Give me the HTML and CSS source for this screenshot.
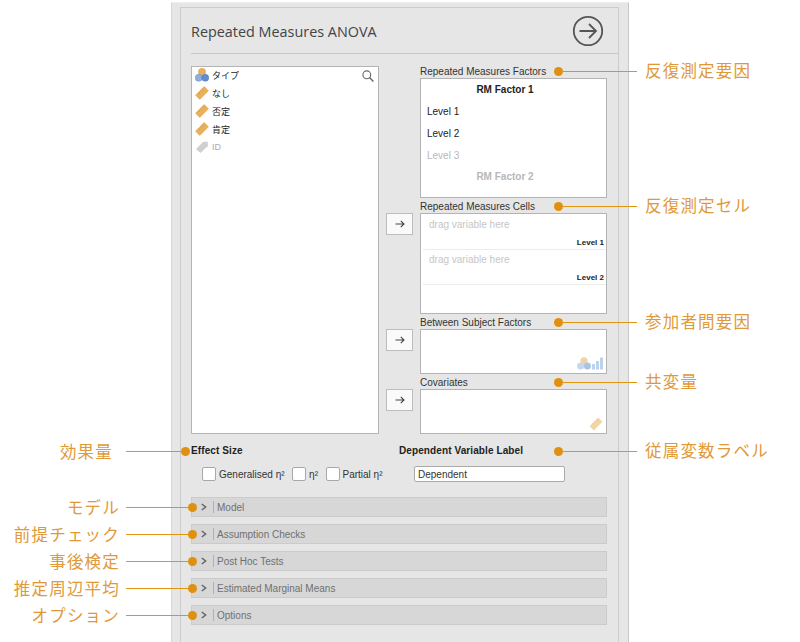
FILE: index.html
```html
<!DOCTYPE html>
<html lang="en">
<head>
    <meta charset="UTF-8">
    <meta name="viewport" content="width=device-width, initial-scale=1.0">
    <title>Repeated Measures ANOVA</title>
    <link rel="stylesheet" href="styles.css">
</head>
<body>
    <svg class="defs" width="0" height="0">
        <symbol id="ruler" viewBox="0 0 14 14">
            <path d="M.6 9.2 9.2.6 13.4 4.8 4.8 13.4Z" fill="#e8b25c" stroke="#dc9f45" stroke-width=".6"/>
            <path d="M3.4 6.4 5.2 8.2M5.4 4.4 6.6 5.6M7.4 2.4 9.2 4.2" stroke="#cf9238" stroke-width=".7"/>
        </symbol>
        <symbol id="nominal" viewBox="0 0 14 14">
            <circle cx="7" cy="3.9" r="3.6" fill="#e8b25c" stroke="#d49a45" stroke-width=".5"/>
            <circle cx="3.7" cy="9.8" r="3.5" fill="#8fb0dd" stroke="#5f88c2" stroke-width=".5"/>
            <circle cx="10.3" cy="9.8" r="3.5" fill="#5f8fd0" stroke="#4a78b8" stroke-width=".5"/>
        </symbol>
        <symbol id="tag" viewBox="0 0 14 14">
            <path d="M1 9 8 2 12.6 1.6 13 6 5.4 13Z" fill="#cfcfcf"/>
        </symbol>
        <symbol id="arrow" viewBox="0 0 12 12">
            <path d="M1.5 6H10M6.8 2.8 10 6 6.8 9.2" fill="none" stroke="#444" stroke-width="1.1"/>
        </symbol>
        <symbol id="chevron" viewBox="0 0 6 8">
            <path d="M.8 1 4.6 4 .8 7" fill="none" stroke="#666" stroke-width="1.5"/>
        </symbol>
    </svg>

    <div class="panel">
        <div class="panel-inner">
            <header class="panel-header">
                <h1>Repeated Measures ANOVA</h1>
                <svg class="run-icon" viewBox="0 0 32 32">
                    <circle cx="16" cy="16" r="14.2" fill="none" stroke="#555" stroke-width="1.8"/>
                    <path d="M7.5 16H24M17 9 24 16 17 23" fill="none" stroke="#555" stroke-width="1.8"/>
                </svg>
            </header>

            <div class="variables">
                <div class="supplier">
                    <svg class="search-icon" viewBox="0 0 12 12">
                        <circle cx="4.8" cy="4.8" r="3.9" fill="none" stroke="#666" stroke-width="1.1"/>
                        <path d="M7.7 7.7 11.4 11.4" stroke="#666" stroke-width="1.4"/>
                    </svg>
                    <ul class="var-list">
                        <li><svg class="var-icon"><use href="#nominal"/></svg>タイプ</li>
                        <li><svg class="var-icon"><use href="#ruler"/></svg>なし</li>
                        <li><svg class="var-icon"><use href="#ruler"/></svg>否定</li>
                        <li><svg class="var-icon"><use href="#ruler"/></svg>肯定</li>
                        <li class="muted"><svg class="var-icon"><use href="#tag"/></svg>ID</li>
                    </ul>
                </div>

                <div class="targets">
                    <section class="target">
                        <h2>Repeated Measures Factors</h2>
                        <div class="box factors">
                            <div class="factor-title">RM Factor 1</div>
                            <div class="factor-level">Level 1</div>
                            <div class="factor-level">Level 2</div>
                            <div class="factor-level faded">Level 3</div>
                            <div class="factor-title faded">RM Factor 2</div>
                        </div>
                    </section>

                    <section class="target">
                        <h2>Repeated Measures Cells</h2>
                        <button class="move"><svg class="move-icon"><use href="#arrow"/></svg></button>
                        <div class="box cells">
                            <div class="cell"><span class="placeholder">drag variable here</span><b>Level 1</b></div>
                            <div class="cell"><span class="placeholder">drag variable here</span><b>Level 2</b></div>
                        </div>
                    </section>

                    <section class="target">
                        <h2>Between Subject Factors</h2>
                        <button class="move"><svg class="move-icon"><use href="#arrow"/></svg></button>
                        <div class="box small">
                            <svg class="hint-icon hint-wide" viewBox="0 0 26 13">
                                <circle cx="7" cy="3.8" r="3.6" fill="#f0d3a6"/>
                                <circle cx="3.6" cy="9" r="3.5" fill="#c5d6ee"/>
                                <circle cx="10.4" cy="9" r="3.5" fill="#a9c4e6"/>
                                <path d="M15 7h3v5.6h-3ZM19 4h3v8.6h-3ZM23 .6h3v12h-3Z" fill="#bdd2ec"/>
                            </svg>
                        </div>
                    </section>

                    <section class="target">
                        <h2>Covariates</h2>
                        <button class="move"><svg class="move-icon"><use href="#arrow"/></svg></button>
                        <div class="box small">
                            <svg class="hint-icon hint-ruler" viewBox="0 0 14 14">
                                <path d="M.6 9.2 9.2.6 13.4 4.8 4.8 13.4Z" fill="#f2d5a6"/>
                                <path d="M3.4 6.4 5.2 8.2M5.4 4.4 6.6 5.6M7.4 2.4 9.2 4.2" stroke="#e8c48c" stroke-width=".7"/>
                            </svg>
                        </div>
                    </section>
                </div>
            </div>

            <div class="settings">
                <div class="effect-size">
                    <h3>Effect Size</h3>
                    <div class="checks">
                        <label class="check"><span class="checkbox"></span>Generalised η²</label>
                        <label class="check"><span class="checkbox"></span>η²</label>
                        <label class="check"><span class="checkbox"></span>Partial η²</label>
                    </div>
                </div>
                <div class="dep-label">
                    <h3>Dependent Variable Label</h3>
                    <div class="text-field">Dependent</div>
                </div>
            </div>

            <div class="sections">
                <div class="section-bar"><span class="chevron"><svg class="chevron-icon"><use href="#chevron"/></svg></span><span>Model</span></div>
                <div class="section-bar"><span class="chevron"><svg class="chevron-icon"><use href="#chevron"/></svg></span><span>Assumption Checks</span></div>
                <div class="section-bar"><span class="chevron"><svg class="chevron-icon"><use href="#chevron"/></svg></span><span>Post Hoc Tests</span></div>
                <div class="section-bar"><span class="chevron"><svg class="chevron-icon"><use href="#chevron"/></svg></span><span>Estimated Marginal Means</span></div>
                <div class="section-bar"><span class="chevron"><svg class="chevron-icon"><use href="#chevron"/></svg></span><span>Options</span></div>
            </div>
        </div>
    </div>

    <!-- callouts on top of the panel -->
    <div class="callout right at-factors"><i class="dot"></i><i class="line"></i><span>反復測定要因</span></div>
    <div class="callout right at-cells"><i class="dot"></i><i class="line"></i><span>反復測定セル</span></div>
    <div class="callout right at-between"><i class="dot"></i><i class="line"></i><span>参加者間要因</span></div>
    <div class="callout right at-covariates"><i class="dot"></i><i class="line"></i><span>共変量</span></div>
    <div class="callout right at-label"><i class="dot"></i><i class="line"></i><span>従属変数ラベル</span></div>

    <div class="callout left at-effect"><span>効果量</span><i class="line"></i><i class="dot"></i></div>
    <div class="callout left at-model"><span>モデル</span><i class="line"></i><i class="dot"></i></div>
    <div class="callout left at-assumption"><span>前提チェック</span><i class="line"></i><i class="dot"></i></div>
    <div class="callout left at-posthoc"><span>事後検定</span><i class="line"></i><i class="dot"></i></div>
    <div class="callout left at-marginal"><span>推定周辺平均</span><i class="line"></i><i class="dot"></i></div>
    <div class="callout left at-options"><span>オプション</span><i class="line"></i><i class="dot"></i></div>
</body>
</html>
```

FILE: styles.css
```css
:root {
    --panel-color: #e6e6e6;
    --box-border: #b4b4b4;
    --note-color: #e0993a;
    --dot-color: #e0900f;
}

* {
    box-sizing: border-box;
}

html, body {
    height: 642px;
    overflow: hidden;
}

body {
    position: relative;
    margin: 0;
    background-color: white;
    font-family: "Liberation Sans", "Noto Sans CJK JP", sans-serif;
    font-size: 10px;
    color: #333;
}

.defs {
    position: absolute;
}

.panel {
    width: 458px;
    height: 640px;
    margin: 2px 0 0 171px;
    padding: 4px 9px 0 8px;
    background-color: var(--panel-color);
    border-left: 1px solid #d8d8d8;
    border-right: 1px solid #c8c8c8;
    border-top: 1px solid #eeeeee;
}

.panel-inner {
    height: 100%;
    padding: 0 10px;
    border: 1px solid #cccccc;
    border-bottom: none;
}

.panel-header {
    display: flex;
    align-items: center;
    justify-content: space-between;
    height: 46px;
    border-bottom: 1px solid #c8c8c8;
    margin-right: -10px;
    padding: 0 14px 0 0;
}

h1 {
    margin: 1px 0 0;
    font-family: "Open Sans", sans-serif;
    font-size: 14.4px;
    font-weight: 400;
    color: #444;
}

.run-icon {
    width: 32px;
    height: 32px;
}

.variables {
    display: flex;
    margin-top: 12px;
}

.supplier {
    position: relative;
    flex: none;
    width: 188px;
    height: 368px;
    background-color: white;
    border: 1px solid var(--box-border);
}

.search-icon {
    position: absolute;
    top: 3px;
    right: 4px;
    width: 12px;
    height: 12px;
}

.var-list {
    list-style-type: none;
    margin: -1px 0 0;
    padding: 0 0 0 3px;
}

.var-list li {
    display: flex;
    align-items: center;
    gap: 3px;
    height: 18px;
    font-size: 9px;
    font-weight: 400;
    color: #222;
}

.var-list li.muted {
    color: #aaaaaa;
}

.var-icon {
    width: 14px;
    height: 14px;
}

.targets {
    margin-left: 7px;
    margin-top: -3px;
}

.target {
    display: grid;
    grid-template-columns: 27px 187px;
    column-gap: 7px;
    margin-top: 2px;
}

.target h2 {
    grid-column: 2;
    grid-row: 1;
    height: 12px;
    margin: 0 0 1px;
    font-size: 10px;
    line-height: 14px;
    font-weight: 400;
    color: #333;
}

.box {
    position: relative;
    grid-column: 2;
    grid-row: 2;
    background-color: white;
    border: 1px solid var(--box-border);
}

.factors {
    height: 120px;
}

.factor-title {
    height: 21px;
    line-height: 21px;
    padding-right: 17px;
    text-align: center;
    font-weight: 700;
    color: #222;
}

.factor-level {
    height: 22px;
    line-height: 24px;
    padding-left: 6px;
    color: #222;
}

.faded {
    color: #b8b8b8;
}

.cells {
    height: 101px;
    padding-top: 1px;
}

.cell {
    display: flex;
    flex-direction: column;
    justify-content: space-between;
    height: 35px;
    margin-left: 2px;
    padding: 4px 2px 1px 6px;
    border-bottom: 1px solid #ececec;
}

.cell b {
    align-self: flex-end;
    font-size: 8px;
    line-height: 11px;
    color: #222;
}

.placeholder {
    line-height: 12px;
    color: #c6c6c6;
}

.small {
    height: 45px;
}

.hint-icon {
    position: absolute;
    right: 3px;
}

.hint-wide {
    bottom: 3px;
    width: 26px;
    height: 13px;
}

.hint-ruler {
    bottom: 2px;
    width: 14px;
    height: 14px;
}

.move {
    grid-column: 1;
    grid-row: 2;
    display: flex;
    align-items: center;
    justify-content: center;
    height: 22px;
    padding: 0;
    background-color: #fafafa;
    border: 1px solid #bdbdbd;
}

.move-icon {
    width: 12px;
    height: 12px;
}

.settings {
    display: flex;
    margin-top: 10px;
}

.effect-size {
    flex: none;
    width: 208px;
}

h3 {
    margin: 0;
    height: 12px;
    font-size: 10px;
    line-height: 14px;
    letter-spacing: 0.1px;
    font-weight: 700;
    color: #222;
}

.checks {
    display: flex;
    margin: 11px 0 0 11px;
}

.check {
    display: flex;
    align-items: center;
    gap: 3px;
    margin-right: 7.5px;
    white-space: nowrap;
    color: #333;
}

.checkbox {
    width: 14px;
    height: 14px;
    background-color: white;
    border: 1px solid #a8a8a8;
    border-radius: 2px;
}

.text-field {
    width: 151px;
    height: 16px;
    margin: 10px 0 0 15px;
    padding-left: 3px;
    line-height: 15px;
    background-color: white;
    border: 1px solid #aaaaaa;
    border-radius: 2px;
    color: #333;
}

.sections {
    display: flex;
    flex-direction: column;
    gap: 7px;
    width: 416px;
    margin-top: 15px;
}

.section-bar {
    display: flex;
    align-items: center;
    height: 20px;
    padding-left: 9px;
    background-color: #d7d7d7;
    border: 1px solid #cbcbcb;
    color: #707070;
}

.chevron {
    display: flex;
    align-items: center;
    width: 13px;
    height: 12px;
    margin-right: 3px;
    border-right: 1px solid #b0b0b0;
}

.chevron-icon {
    width: 6px;
    height: 8px;
}

/* callouts */
.callout {
    position: absolute;
    display: flex;
    align-items: center;
    height: 21px;
    font-size: 16.5px;
    letter-spacing: 1.2px;
    color: var(--note-color);
    white-space: nowrap;
}

.callout span {
    margin-bottom: 2px;
}

.callout .dot {
    flex: none;
    width: 9px;
    height: 9px;
    border-radius: 50%;
    background-color: var(--dot-color);
}

.callout .line {
    height: 1px;
    background-color: #e0940f;
}

.callout.right {
    left: 554px;
}

.callout.right span {
    margin-bottom: 4px;
}

.callout.right .line {
    width: 74px;
    margin-right: 8px;
}

.callout.left {
    left: 0;
    width: 197px;
}

.callout.left span {
    flex: none;
    width: 120px;
    text-align: right;
    margin-right: 6px;
}

.callout.left .line {
    flex: 1;
}

.at-factors { top: 61px; }
.at-cells { top: 196px; }
.at-between { top: 312px; }
.at-covariates { top: 372px; }
.at-label { top: 441px; }

.callout.at-effect { top: 441px; width: 190px; }
.callout.at-effect span { width: 113px; margin-right: 13px; }
.at-model { top: 497px; }
.at-assumption { top: 524px; }
.at-posthoc { top: 551px; }
.at-marginal { top: 578px; }
.at-options { top: 605px; }
```
